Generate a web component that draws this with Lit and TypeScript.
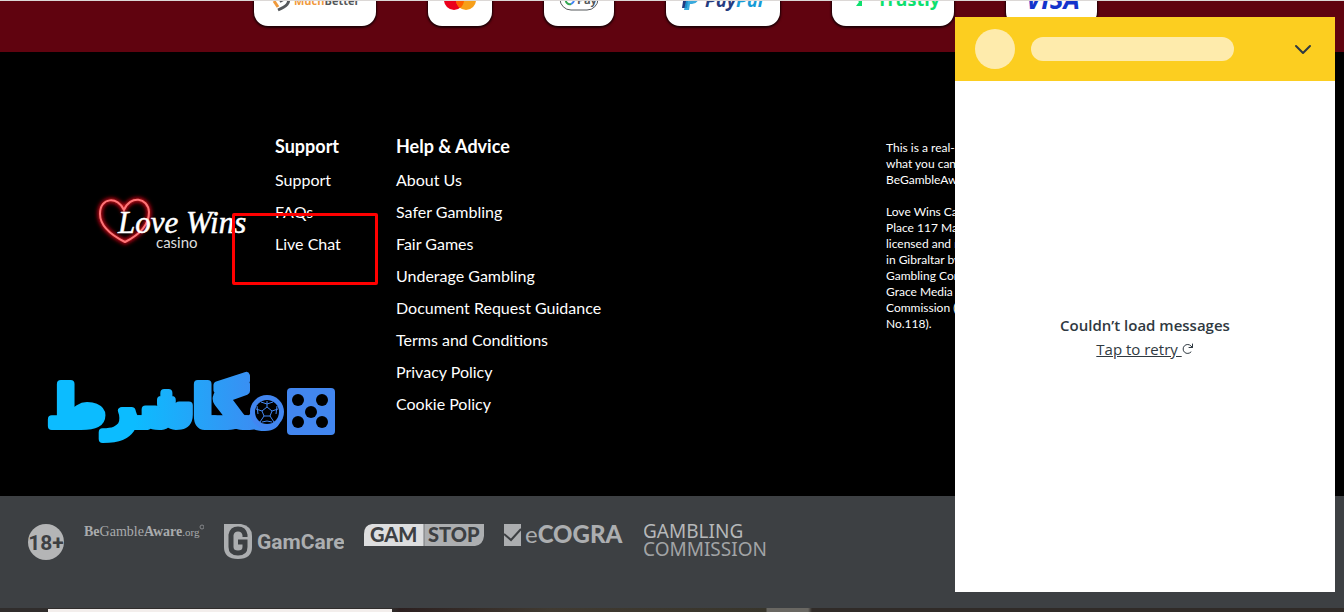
import { LitElement, html, css, svg } from "lit";
import { customElement } from "lit/decorators.js";

const supportLinks = ["Support", "FAQs", "Live Chat"];
const helpLinks = [
  "About Us",
  "Safer Gambling",
  "Fair Games",
  "Underage Gambling",
  "Document Request Guidance",
  "Terms and Conditions",
  "Privacy Policy",
  "Cookie Policy",
];
const legalIntro = ["This is a real-money site,", "what you can afford,", "BeGambleAware.org"];
const legalBody = [
  "Love Wins Casino,",
  "Place 117 Main Street,",
  "licensed and regulated",
  "in Gibraltar by the",
  "Gambling Commission.",
  "Grace Media Limited,",
  "Commission (Licence",
  "No.118).",
];

@customElement("payment-strip")
export class PaymentStrip extends LitElement {
  static styles = css`
    :host { display: block; }
    .strip {
      display: flex; justify-content: center; align-items: flex-end; gap: 52px;
      height: 52px; box-sizing: border-box; padding: 0 0 26px 7px; overflow: hidden;
      background: #60030f; border-top: 1px solid #dcd8d6;
    }
    .card {
      flex: none; height: 60px; border-radius: 0 0 14px 14px; background: #fff;
      box-shadow: 0 1px 2px 1px #200006; display: flex; align-items: flex-end; justify-content: center;
    }
    .card svg { display: block; }
    .better { width: 122px; } .master { width: 64px; } .gpay { width: 70px; }
    .paypal { width: 114px; } .trustly { width: 122px; } .visa { width: 91px; }
    text { font-family: "Open Sans", "Noto Sans", sans-serif; font-weight: 700; }
  `;
  render() {
    return html`<div class="strip">
      <div class="card better">
        <svg width="122" height="40" viewBox="0 -14 122 40" role="img" aria-label="MuchBetter">
          <path d="M20 1l4 6" stroke="#f09a3c" stroke-width="3" />
          <path d="M34-2c2 5-1 8-10 12" fill="none" stroke="#55585b" stroke-width="3" />
          <path d="M26 2l5-3" stroke="#55585b" stroke-width="2" />
          <text x="40" y="5" font-size="11" fill="#f09a3c">Much<tspan fill="#55585b">Better</tspan></text>
        </svg>
      </div>
      <div class="card master">
        <svg width="64" height="40" viewBox="0 -14 64 40" role="img" aria-label="Mastercard">
          <circle cx="26" cy="0" r="10" fill="#ea001b" />
          <circle cx="38" cy="0" r="10" fill="#f79f1a" />
          <path d="M32-8a10 10 0 0 1 0 16a10 10 0 0 1 0-16" fill="#ff5f01" />
        </svg>
      </div>
      <div class="card gpay">
        <svg width="70" height="40" viewBox="0 -14 70 40" role="img" aria-label="Google Pay">
          <rect x="16" y="-13" width="38" height="23" rx="11" fill="#fff" stroke="#55585b" />
          <path d="M22-1a4 4 0 0 0 5 5" fill="none" stroke="#34a853" stroke-width="2" />
          <path d="M27 4a5 5 0 0 0 3-5h-4" fill="none" stroke="#4285f4" stroke-width="2" />
          <text x="33" y="4" font-size="11" font-weight="400" fill="#55585b">Pay</text>
        </svg>
      </div>
      <div class="card paypal">
        <svg width="114" height="40" viewBox="0 -14 114 40" role="img" aria-label="PayPal">
          <path d="M19-12h9q6 1 4 7q-2 5-8 5h-2l-1 8h-5z" fill="#253b80" />
          <path d="M25-5h7q2 8-6 9h-2l-1 6h-5l2-9h4z" fill="#179bd7" opacity=".85" />
          <text x="39" y="7" font-size="18" font-style="italic" fill="#253b80">Pay<tspan fill="#179bd7">Pal</tspan></text>
        </svg>
      </div>
      <div class="card trustly">
        <svg width="122" height="40" viewBox="0 -14 122 40" role="img" aria-label="Trustly">
          <path d="M23-3h7v9h-6l3-4z" fill="#0ee06e" />
          <text x="45" y="6" font-size="18" fill="#0ee06e">Trustly</text>
        </svg>
      </div>
      <div class="card visa">
        <svg width="91" height="40" viewBox="0 -14 91 40" role="img" aria-label="Visa">
          <text x="20" y="9" font-size="26" font-style="italic" fill="#1434cb">VISA</text>
        </svg>
      </div>
    </div>`;
  }
}

@customElement("site-footer")
export class SiteFooter extends LitElement {
  static styles = css`
    :host { display: block; }
    .footer {
      position: relative; display: grid; grid-template-columns: 177px 121px 1fr 458px;
      padding: 78px 0 76px 98px; background: #000; color: #fff;
      font-family: Lato, "Open Sans", sans-serif; font-size: 16px; line-height: 32px; overflow: hidden;
    }
    .brand { margin-top: 62px; }
    .brand svg { display: block; overflow: visible; }
    h2 { margin: 0 0 2px; font-size: 18px; line-height: 32px; font-weight: 700; }
    ul { list-style: none; margin: 0; padding: 0; }
    a { color: inherit; text-decoration: none; }
    .link { white-space: nowrap; }
    .legal { padding-top: 10px; font-size: 12px; line-height: 16px; white-space: nowrap; }
    .legal p { margin: 0 0 16px; }
    .line { display: block; }
    .highlight {
      position: absolute; left: 232px; top: 161px; width: 146px; height: 72px;
      box-sizing: border-box; border: 3px solid #f00; border-radius: 2px; pointer-events: none;
    }
    .watermark { position: absolute; left: 44px; top: 318px; overflow: visible; }
    .script { font-family: "Liberation Serif", serif; font-style: italic; font-size: 31px; }
    .casino { font-family: Lato, sans-serif; font-size: 15px; }
    .persian { font-family: "DejaVu Sans", sans-serif; font-weight: 700; font-size: 55px; }
  `;
  render() {
    return html`<footer class="footer">
      <a class="brand" href="#">
        <svg width="150" height="60" viewBox="0 0 150 60" role="img" aria-label="Love Wins casino">
          <defs><filter id="glow" x="-30%" y="-30%" width="160%" height="160%"><feGaussianBlur stdDeviation="2" /></filter></defs>
          <path d="M26 18C20 4 2 5 2 22C2 34 13 43 27 50C43 42 51 33 51 20C50 5 32 3 26 18Z" fill="none" stroke="#f0101c" stroke-width="4" filter="url(#glow)" />
          <path d="M26 18C20 4 2 5 2 22C2 34 13 43 27 50C43 42 51 33 51 20C50 5 32 3 26 18Z" fill="none" stroke="#ff7478" stroke-width="2" />
          <text class="script" x="20" y="41" fill="#fff" stroke="#fff" stroke-width="0.500">Love Wins</text>
          <text class="casino" x="58" y="56" fill="#ddd">casino</text>
        </svg>
      </a>
      <nav aria-labelledby="support-title">
        <h2 id="support-title">Support</h2>
        <ul>${supportLinks.map((t) => html`<li><a class="link" href="#">${t}</a></li>`)}</ul>
      </nav>
      <nav aria-labelledby="help-title">
        <h2 id="help-title">Help &amp; Advice</h2>
        <ul>${helpLinks.map((t) => html`<li><a class="link" href="#">${t}</a></li>`)}</ul>
      </nav>
      <div class="legal">
        <p>${legalIntro.map((t) => html`<span class="line">${t}</span>`)}</p>
        <p>${legalBody.map((t) => html`<span class="line">${t}</span>`)}</p>
      </div>
      <div class="highlight"></div>
      <svg class="watermark" width="300" height="84" viewBox="0 0 300 84">
        <defs>
          <linearGradient id="sky" gradientUnits="userSpaceOnUse" x1="90" y1="0" x2="230" y2="0">
            <stop offset="0" stop-color="#0cbcff" /><stop offset="1" stop-color="#4286f0" />
          </linearGradient>
        </defs>
        <text class="persian" x="236" y="56" direction="rtl" fill="url(#sky)" stroke="url(#sky)" stroke-width="8" stroke-linejoin="round">مگاشرط</text>
        <circle cx="223" cy="42" r="17" fill="#4286f0" />
        <circle cx="223" cy="42" r="12" fill="#000" />
        <path d="M223 37l5 4-2 5h-6l-2-5zM223 37v-6M228 41l6-2M226 46l4 6M220 46l-4 6M218 41l-6-2M217 32l6 2 6-2M233 36l-1 8M213 36l1 8M218 52l5-1 5 1" fill="none" stroke="#4286f0" stroke-width="1" />
        <rect x="243" y="18" width="48" height="47" rx="4" fill="#4286ef" />
        ${[[254, 30], [278, 30], [267, 42], [254, 52], [278, 52]].map(([x, y]) => svg`<circle cx=${x} cy=${y} r="6" fill="#000" />`)}
      </svg>
    </footer>`;
  }
}

@customElement("trust-bar")
export class TrustBar extends LitElement {
  static styles = css`
    :host { display: block; }
    .bar { display: flex; align-items: flex-start; gap: 20px; padding: 28px 28px 48px; background: #3d4043; }
    .bar a { display: block; }
    svg { display: block; }
    .slab { font-family: "Liberation Serif", serif; font-size: 14px; }
    .grot { font-family: Roboto, sans-serif; font-weight: 700; }
    .geo { font-family: Lato, sans-serif; font-weight: 900; }
    .hum { font-family: "Noto Sans", sans-serif; }
    .next { height: 4px; display: flex; background: linear-gradient(90deg, #302d2c 0 392px, #2c2020 400px, #403a31 550px, #38352b 766px, #696762 767px 808px, #302b28 812px); padding-left: 48px; }
    .sheet { width: 344px; margin-top: 1px; background: #f3eeec; }
  `;
  render() {
    return html`<div class="bar">
        <a href="#"><svg width="36" height="36" role="img" aria-label="18+">
          <circle cx="18" cy="18" r="18" fill="#b4b5b6" />
          <text class="grot" x="18" y="26" font-size="21" text-anchor="middle" fill="#3d4043">18+</text>
        </svg></a>
        <a href="#"><svg width="120" height="36" role="img" aria-label="BeGambleAware.org">
          <text class="slab" x="0" y="12" fill="#a9abad"><tspan font-weight="700">Be</tspan>Gamble<tspan font-weight="700">Aware</tspan><tspan font-size="11">.org</tspan></text>
          <circle cx="118" cy="3" r="2" fill="none" stroke="#85878a" />
        </svg></a>
        <a href="#"><svg width="120" height="36" role="img" aria-label="GamCare">
          <path d="M0 0h17q11 2 11 12v11q0 12-14 12T0 23z" fill="#acaeb0" />
          <path d="M21 13v-2q-1-6-7-6t-7 6v12q0 6 7 6t7-6v-5h-7" fill="none" stroke="#3d4043" stroke-width="5" />
          <text class="grot" x="33" y="25" font-size="21" fill="#acaeb0">GamCare</text>
        </svg></a>
        <a href="#"><svg width="120" height="36" role="img" aria-label="GAMSTOP">
          <path d="M8 0h52v22H0V10Q0 1 8 0z" fill="#dddedf" />
          <path d="M60 0h60v12q-1 9-9 10H60z" fill="#acaeb0" />
          <path d="M60 0v22" stroke="#77797b" />
          <text class="geo" x="6" y="18" font-size="20" fill="#3d4043">GAM</text>
          <text class="geo" x="64" y="18" font-size="20" fill="#3d4043">STOP</text>
        </svg></a>
        <a href="#"><svg width="120" height="36" role="img" aria-label="eCOGRA">
          <path d="M0 0h17v22H0z" fill="#acaeb0" />
          <path d="M0 10l7 6L17 5" fill="none" stroke="#3d4043" stroke-width="2" />
          <text class="geo" x="21" y="19" font-size="24" fill="#acaeb0"><tspan font-weight="400">e</tspan>COGRA</text>
        </svg></a>
        <a href="#"><svg width="130" height="36" role="img" aria-label="Gambling Commission">
          <text class="hum" x="-1" y="14" font-size="19" fill="#b6b8ba">GAMBLING</text>
          <text class="hum" x="-1" y="32" font-size="19" fill="#a2a4a6">COMMISSION</text>
        </svg></a>
      </div>
      <div class="next"><div class="sheet"></div></div>`;
  }
}

@customElement("chat-panel")
export class ChatPanel extends LitElement {
  static styles = css`
    :host {
      position: fixed; right: 9px; top: 17px; bottom: 20px; width: 380px;
      display: flex; flex-direction: column; background: #fff; color: #2f3941;
      font-family: "Open Sans", "Noto Sans", sans-serif; font-size: 15px; line-height: 24px;
    }
    header { display: flex; align-items: center; gap: 16px; padding: 12px 20px; background: #fcce20; }
    .avatar { width: 40px; height: 40px; border-radius: 50%; background: #feebac; }
    .title { width: 203px; height: 24px; border-radius: 12px; background: #feebac; }
    .close { margin-left: auto; width: 24px; height: 24px; padding: 0; border: 0; background: none; color: #2f3941; }
    .close svg { display: block; }
    .body { flex: 1; display: flex; flex-direction: column; align-items: center; justify-content: center; }
    .body p { margin: 0; font-weight: 600; }
    .retry { display: flex; align-items: center; padding: 0; border: 0; background: none; color: inherit; font: inherit; text-decoration: underline; white-space: pre; }
  `;
  render() {
    return html`<header>
        <div class="avatar"></div>
        <div class="title"></div>
        <button class="close" aria-label="Minimise chat">
          <svg width="24" height="24"><path d="M5 9l7 7 7-7" fill="none" stroke="currentColor" stroke-width="2" stroke-linecap="round" stroke-linejoin="round" /></svg>
        </button>
      </header>
      <div class="body">
        <p>Couldn’t load messages</p>
        <button class="retry"><span>Tap to retry </span><svg width="12" height="12" viewBox="0 0 12 12"><path d="M9 9a4.500 4.500 0 1 1 0-6l1.500 1.500M10.500 1v3.500H7" fill="none" stroke="currentColor" stroke-linecap="round" stroke-linejoin="round" /></svg></button>
      </div>`;
  }
}

@customElement("app-root")
export class AppRoot extends LitElement {
  static styles = css`
    :host { display: block; background: #000; }
  `;
  render() {
    return html`<payment-strip></payment-strip>
      <site-footer></site-footer>
      <trust-bar></trust-bar>
      <chat-panel></chat-panel>`;
  }
}
